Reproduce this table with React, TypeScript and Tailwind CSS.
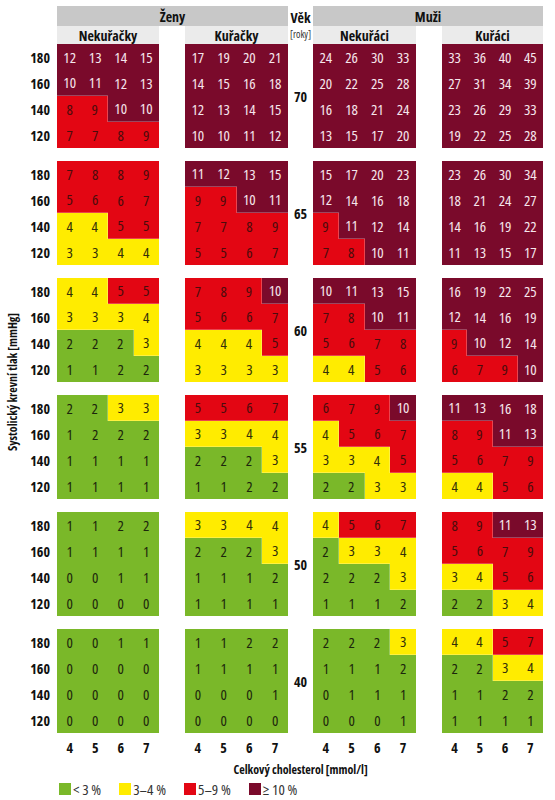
const font = "font-['Open_Sans',sans-serif] [font-stretch:75%]";

type Block = number[][];

const bp = [180, 160, 140, 120];
const chol = [4, 5, 6, 7];

// each age: women non-smoker, women smoker, men non-smoker, men smoker
const ages: { age: number; blocks: Block[] }[] = [
  {
    age: 70,
    blocks: [
      [[12, 13, 14, 15], [10, 11, 12, 13], [8, 9, 10, 10], [7, 7, 8, 9]],
      [[17, 19, 20, 21], [14, 15, 16, 18], [12, 13, 14, 15], [10, 10, 11, 12]],
      [[24, 26, 30, 33], [20, 22, 25, 28], [16, 18, 21, 24], [13, 15, 17, 20]],
      [[33, 36, 40, 45], [27, 31, 34, 39], [23, 26, 29, 33], [19, 22, 25, 28]],
    ],
  },
  {
    age: 65,
    blocks: [
      [[7, 8, 8, 9], [5, 6, 6, 7], [4, 4, 5, 5], [3, 3, 4, 4]],
      [[11, 12, 13, 15], [9, 9, 10, 11], [7, 7, 8, 9], [5, 5, 6, 7]],
      [[15, 17, 20, 23], [12, 14, 16, 18], [9, 11, 12, 14], [7, 8, 10, 11]],
      [[23, 26, 30, 34], [18, 21, 24, 27], [14, 16, 19, 22], [11, 13, 15, 17]],
    ],
  },
  {
    age: 60,
    blocks: [
      [[4, 4, 5, 5], [3, 3, 3, 4], [2, 2, 2, 3], [1, 1, 2, 2]],
      [[7, 8, 9, 10], [5, 6, 6, 7], [4, 4, 4, 5], [3, 3, 3, 3]],
      [[10, 11, 13, 15], [7, 8, 10, 11], [5, 6, 7, 8], [4, 4, 5, 6]],
      [[16, 19, 22, 25], [12, 14, 16, 19], [9, 10, 12, 14], [6, 7, 9, 10]],
    ],
  },
  {
    age: 55,
    blocks: [
      [[2, 2, 3, 3], [1, 2, 2, 2], [1, 1, 1, 1], [1, 1, 1, 1]],
      [[5, 5, 6, 7], [3, 3, 4, 4], [2, 2, 2, 3], [1, 1, 2, 2]],
      [[6, 7, 9, 10], [4, 5, 6, 7], [3, 3, 4, 5], [2, 2, 3, 3]],
      [[11, 13, 16, 18], [8, 9, 11, 13], [5, 6, 7, 9], [4, 4, 5, 6]],
    ],
  },
  {
    age: 50,
    blocks: [
      [[1, 1, 2, 2], [1, 1, 1, 1], [0, 0, 1, 1], [0, 0, 0, 0]],
      [[3, 3, 4, 4], [2, 2, 2, 3], [1, 1, 1, 2], [1, 1, 1, 1]],
      [[4, 5, 6, 7], [2, 3, 3, 4], [2, 2, 2, 3], [1, 1, 1, 2]],
      [[8, 9, 11, 13], [5, 6, 7, 9], [3, 4, 5, 6], [2, 2, 3, 4]],
    ],
  },
  {
    age: 40,
    blocks: [
      [[0, 0, 1, 1], [0, 0, 0, 0], [0, 0, 0, 0], [0, 0, 0, 0]],
      [[1, 1, 2, 2], [1, 1, 1, 1], [0, 0, 0, 1], [0, 0, 0, 0]],
      [[2, 2, 2, 3], [1, 1, 1, 2], [0, 1, 1, 1], [0, 0, 0, 1]],
      [[4, 4, 5, 7], [2, 2, 3, 4], [1, 1, 2, 2], [1, 1, 1, 1]],
    ],
  },
];

function level(v: number) {
  if (v < 3) return 0;
  if (v <= 4) return 1;
  if (v <= 9) return 2;
  return 3;
}

const levelClass = [
  "bg-[#7ab829] text-[#1c260c]",
  "bg-[#ffec00] text-[#33300a]",
  "bg-[#e30613] text-[#4a0c0c]",
  "bg-[#7a0a2b] text-[#f6e6ec]",
];

function Grid({ data, width }: { data: Block; width: string }) {
  return (
    <div className={`${width} grid grid-cols-4`}>
      {data.map((row, r) =>
        row.map((v, c) => {
          const l = level(v);
          // faint line where the colour band changes
          const right = c < 3 && level(row[c + 1]) !== l ? "border-r border-r-white/25" : "";
          const bottom = r < 3 && level(data[r + 1][c]) !== l ? "border-b border-b-white/25" : "";
          return (
            <div
              key={`${r}-${c}`}
              className={`${levelClass[l]} ${right} ${bottom} h-[26px] flex items-center justify-center text-[15px]`}
            >
              {v}
            </div>
          );
        })
      )}
    </div>
  );
}

const widths = ["w-[102px]", "w-[103px]", "w-[103px]", "w-[101px]"];

function Legend({ color, label }: { color: string; label: string }) {
  return (
    <div className="flex items-center gap-[2px]">
      <div className={`w-[12px] h-[12px] ${color}`} />
      <span className="text-[15px] text-[#333]">{label}</span>
    </div>
  );
}

export default function App() {
  return (
    <div className={`${font} w-[555px] h-[800px] bg-white pt-[6px] text-[#111]`}>
      {/* headers */}
      <div className="flex pl-[57px] h-[20px]">
        <div className="w-[231px] bg-[#c8c8c8] flex items-center justify-center font-bold text-[14px]">Ženy</div>
        <div className="w-[25px] flex items-end justify-center font-bold text-[14px] leading-[16px]">Věk</div>
        <div className="w-[230px] bg-[#c8c8c8] flex items-center justify-center font-bold text-[14px]">Muži</div>
      </div>
      <div className="flex pl-[57px] h-[18px]">
        <div className="w-[102px] bg-[#ebebeb] flex items-center justify-center font-bold text-[14px]">Nekuřačky</div>
        <div className="w-[26px]" />
        <div className="w-[103px] bg-[#ebebeb] flex items-center justify-center font-bold text-[14px]">Kuřačky</div>
        <div className="w-[25px] flex items-start justify-center text-[10px] leading-[12px] pt-[2px] text-[#333]">[roky]</div>
        <div className="w-[103px] bg-[#ebebeb] flex items-center justify-center font-bold text-[14px]">Nekuřáci</div>
        <div className="w-[26px]" />
        <div className="w-[101px] bg-[#ebebeb] flex items-center justify-center font-bold text-[14px]">Kuřáci</div>
      </div>

      {/* body */}
      <div className="flex">
        <div className="w-[26px] flex items-center justify-center pb-[12px]">
          <div className="[writing-mode:vertical-rl] rotate-180 whitespace-nowrap font-bold text-[12px]">
            Systolický krevní tlak [mmHg]
          </div>
        </div>
        <div className="flex flex-col gap-[13px]">
          {ages.map((a) => (
            <div key={a.age} className="flex">
              <div className="w-[31px] flex flex-col pr-[7px]">
                {bp.map((b) => (
                  <div key={b} className="h-[26px] flex items-center justify-end font-bold text-[14px]">
                    {b}
                  </div>
                ))}
              </div>
              <Grid data={a.blocks[0]} width={widths[0]} />
              <div className="w-[26px]" />
              <Grid data={a.blocks[1]} width={widths[1]} />
              <div className="w-[25px] flex items-center justify-center font-bold text-[14px]">{a.age}</div>
              <Grid data={a.blocks[2]} width={widths[2]} />
              <div className="w-[26px]" />
              <Grid data={a.blocks[3]} width={widths[3]} />
            </div>
          ))}
        </div>
      </div>

      {/* x axis */}
      <div className="flex pl-[57px] h-[28px] font-bold text-[14px]">
        {[widths[0], "w-[26px]", widths[1], "w-[25px]", widths[2], "w-[26px]", widths[3]].map((w, i) =>
          i % 2 === 0 ? (
            <div key={i} className={`${w} grid grid-cols-4`}>
              {chol.map((c) => (
                <div key={c} className="flex items-center justify-center">
                  {c}
                </div>
              ))}
            </div>
          ) : (
            <div key={i} className={w} />
          )
        )}
      </div>
      <div className="h-[18px] flex items-center justify-center pl-[46px] font-bold text-[12px]">
        Celkový cholesterol [mmol/l]
      </div>
      <div className="h-[20px] flex items-center gap-[18px] pl-[59px]">
        <Legend color="bg-[#7ab829]" label="< 3 %" />
        <Legend color="bg-[#ffec00]" label="3–4 %" />
        <Legend color="bg-[#e30613]" label="5–9 %" />
        <Legend color="bg-[#7a0a2b]" label="≥ 10 %" />
      </div>
    </div>
  );
}
